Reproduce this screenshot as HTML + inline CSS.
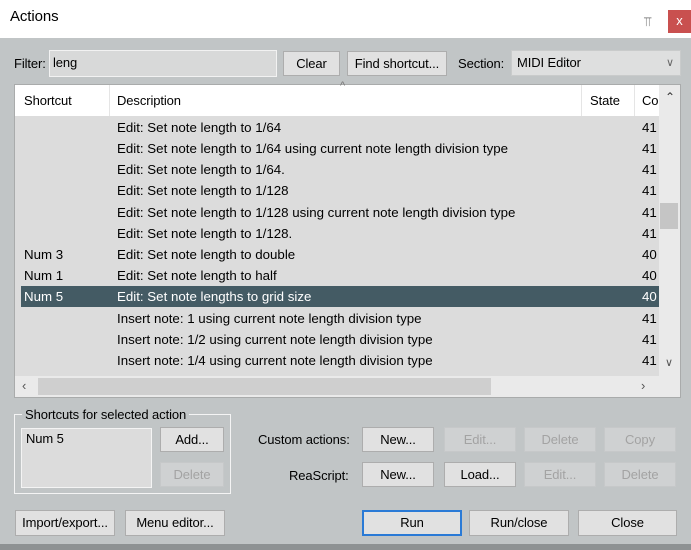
<!DOCTYPE html>
<html><head><style>
*{box-sizing:border-box;margin:0;padding:0}
body{width:691px;height:550px;overflow:hidden;background:#c1c5c6;font-family:"Liberation Sans",sans-serif;font-size:13px;color:#000;position:relative;letter-spacing:-0.1px}
.a{position:absolute}
.title{left:0;top:0;width:691px;height:38px;background:#fff}
.btn{position:absolute;background:#e1e1e1;border:1px solid #adadad;text-align:center;line-height:23px;height:25px}
.dis{color:#a3a3a3;background:#cfd1d2;border-color:#c6c8c9}
.row{position:absolute;left:15px;width:644px;height:21px;line-height:21px;font-size:13.3px;letter-spacing:0}
.row span{position:absolute}
.s{left:9px}.d{left:102px}.c{left:627px}
</style></head><body>
<div class="a title"></div>
<div class="a" style="left:10px;top:8px;font-size:15px">Actions</div>
<div class="a" style="left:644px;top:14px;font-size:13px;color:#666">⫪</div>
<div class="a" style="left:668px;top:10px;width:23px;height:23px;background:#c9504f;color:#fff;text-align:center;line-height:22px;font-size:13px">x</div>

<div class="a" style="left:14px;top:56px">Filter:</div>
<div class="a" style="left:49px;top:50px;width:228px;height:27px;background:#d8d9d9;border:1px solid #f2f2f2;padding:3px 3px;line-height:18px">leng</div>
<div class="btn" style="left:283px;top:51px;width:57px;line-height:24px">Clear</div>
<div class="btn" style="left:347px;top:51px;width:100px;line-height:24px">Find shortcut...</div>
<div class="a" style="left:458px;top:56px">Section:</div>
<div class="a" style="left:511px;top:50px;width:170px;height:26px;background:#dedfdf;border:1px solid #c9cbcb;padding-left:5px;line-height:24px">MIDI Editor<span style="position:absolute;right:6px;top:0;color:#666;font-size:11px">&#8744;</span></div>

<div class="a" style="left:14px;top:84px;width:667px;height:314px;background:#dcdcdc;border:1px solid #a9abab"></div>
<div class="a" style="left:15px;top:85px;width:644px;height:31px;background:#fff"></div>
<div class="a" style="left:109px;top:85px;width:1px;height:31px;background:#e5e5e5"></div>
<div class="a" style="left:581px;top:85px;width:1px;height:31px;background:#e5e5e5"></div>
<div class="a" style="left:634px;top:85px;width:1px;height:31px;background:#e5e5e5"></div>
<div class="a" style="left:24px;top:93px">Shortcut</div>
<div class="a" style="left:117px;top:93px">Description</div>
<div class="a" style="left:340px;top:80px;font-size:11px;color:#777">^</div>
<div class="a" style="left:590px;top:93px">State</div>
<div class="a" style="left:642px;top:93px;width:16px;overflow:hidden">Co</div>
<div class="a" style="left:659px;top:85px;width:21px;height:291px;background:#eaeaea"></div>
<div class="a" style="left:665px;top:90px;font-size:12px;color:#333">&#8963;</div>
<div class="a" style="left:660px;top:203px;width:18px;height:26px;background:#c5c5c5"></div>
<div class="a" style="left:665px;top:356px;font-size:11px;color:#555">&#8744;</div>
<div class="a" style="left:15px;top:376px;width:665px;height:21px;background:#eaeaea"></div>
<div class="a" style="left:38px;top:378px;width:453px;height:17px;background:#cfcfcf"></div>
<div class="a" style="left:22px;top:378px;color:#555">&lsaquo;</div>
<div class="a" style="left:641px;top:378px;color:#555">&rsaquo;</div>

<div class="row" style="top:117px"><span class="d">Edit: Set note length to 1/64</span><span class="c">41</span></div>
<div class="row" style="top:138px"><span class="d">Edit: Set note length to 1/64 using current note length division type</span><span class="c">41</span></div>
<div class="row" style="top:159px"><span class="d">Edit: Set note length to 1/64.</span><span class="c">41</span></div>
<div class="row" style="top:180px"><span class="d">Edit: Set note length to 1/128</span><span class="c">41</span></div>
<div class="row" style="top:202px"><span class="d">Edit: Set note length to 1/128 using current note length division type</span><span class="c">41</span></div>
<div class="row" style="top:223px"><span class="d">Edit: Set note length to 1/128.</span><span class="c">41</span></div>
<div class="row" style="top:244px"><span class="s">Num 3</span><span class="d">Edit: Set note length to double</span><span class="c">40</span></div>
<div class="row" style="top:265px"><span class="s">Num 1</span><span class="d">Edit: Set note length to half</span><span class="c">40</span></div>
<div class="row" style="top:286px;left:21px;width:638px;background:#445b64;color:#fff"><span class="s" style="left:3px">Num 5</span><span class="d" style="left:96px">Edit: Set note lengths to grid size</span><span class="c" style="left:621px">40</span></div>
<div class="row" style="top:308px"><span class="d">Insert note: 1 using current note length division type</span><span class="c">41</span></div>
<div class="row" style="top:329px"><span class="d">Insert note: 1/2 using current note length division type</span><span class="c">41</span></div>
<div class="row" style="top:350px"><span class="d">Insert note: 1/4 using current note length division type</span><span class="c">41</span></div>
<div class="row" style="top:371px;height:5px;overflow:hidden"><span class="d">Insert note: 1/8 using current note length division type</span><span class="c">41</span></div>

<div class="a" style="left:14px;top:414px;width:217px;height:80px;border:1px solid #f4f4f4"></div>
<div class="a" style="left:22px;top:407px;background:#c1c5c6;padding:0 3px">Shortcuts for selected action</div>
<div class="a" style="left:21px;top:428px;width:131px;height:60px;background:#dcdcdc;border:1px solid #f4f4f4;padding:2px 4px">Num 5</div>
<div class="btn" style="left:160px;top:427px;width:64px">Add...</div>
<div class="btn dis" style="left:160px;top:462px;width:64px">Delete</div>

<div class="a" style="left:258px;top:432px">Custom actions:</div>
<div class="btn" style="left:362px;top:427px;width:72px">New...</div>
<div class="btn dis" style="left:444px;top:427px;width:72px">Edit...</div>
<div class="btn dis" style="left:524px;top:427px;width:72px">Delete</div>
<div class="btn dis" style="left:604px;top:427px;width:72px">Copy</div>
<div class="a" style="left:289px;top:468px">ReaScript:</div>
<div class="btn" style="left:362px;top:462px;width:72px">New...</div>
<div class="btn" style="left:444px;top:462px;width:72px">Load...</div>
<div class="btn dis" style="left:524px;top:462px;width:72px">Edit...</div>
<div class="btn dis" style="left:604px;top:462px;width:72px">Delete</div>

<div class="btn" style="left:15px;top:510px;width:100px;height:26px;line-height:24px">Import/export...</div>
<div class="btn" style="left:125px;top:510px;width:100px;height:26px;line-height:24px">Menu editor...</div>
<div class="btn" style="left:362px;top:510px;width:100px;height:26px;line-height:22px;border:2px solid #2a7ad6">Run</div>
<div class="btn" style="left:469px;top:510px;width:100px;height:26px;line-height:24px">Run/close</div>
<div class="btn" style="left:578px;top:510px;width:99px;height:26px;line-height:24px">Close</div>
<div class="a" style="left:0;top:544px;width:691px;height:6px;background:#8e9293"></div>
</body></html>
